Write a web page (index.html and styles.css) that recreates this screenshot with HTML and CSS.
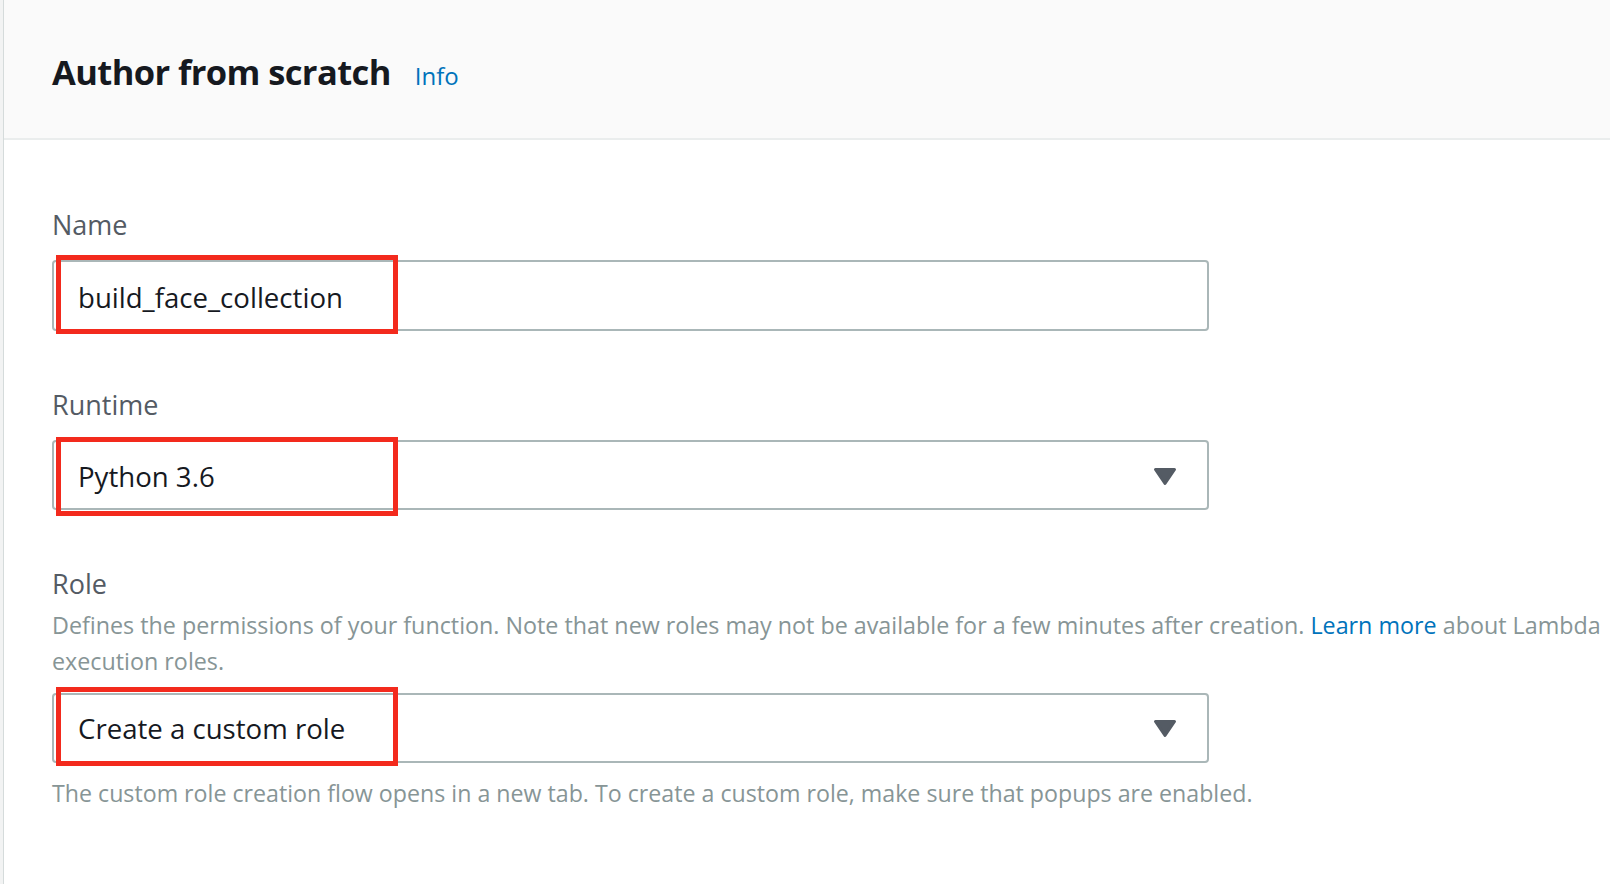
FILE: index.html
```html
<!DOCTYPE html>
<html lang="en">
<head>
<meta charset="utf-8">
<title>Author from scratch</title>
<link rel="stylesheet" href="styles.css">
</head>
<body>
<div class="panel">
  <header class="panel-header">
    <h2 class="panel-title">Author from scratch</h2>
    <a class="info-link" href="#">Info</a>
  </header>
  <section class="form">
    <div class="field">
      <label class="field-label">Name</label>
      <div class="control">
        <div class="text-input">build_face_collection</div>
        <span class="highlight highlight-name"></span>
      </div>
    </div>
    <div class="field">
      <label class="field-label">Runtime</label>
      <div class="control">
        <div class="select">
          <span>Python 3.6</span>
          <svg class="caret" width="24" height="19" viewBox="0 0 24 19"><polygon points="2.5,2.5 21.5,2.5 12,16.5" fill="#545b64" stroke="#545b64" stroke-width="3" stroke-linejoin="round"/></svg>
        </div>
        <span class="highlight highlight-runtime"></span>
      </div>
    </div>
    <div class="field">
      <label class="field-label field-label-tight">Role</label>
      <p class="description">Defines the permissions of your function. Note that new roles may not be available for a few minutes after creation. <a class="link" href="#">Learn more</a> about Lambda execution roles.</p>
      <div class="control">
        <div class="select select-compact">
          <span>Create a custom role</span>
          <svg class="caret" width="24" height="19" viewBox="0 0 24 19"><polygon points="2.5,2.5 21.5,2.5 12,16.5" fill="#545b64" stroke="#545b64" stroke-width="3" stroke-linejoin="round"/></svg>
        </div>
        <span class="highlight highlight-role"></span>
      </div>
      <p class="hint">The custom role creation flow opens in a new tab. To create a custom role, make sure that popups are enabled.</p>
    </div>
  </section>
</div>
</body>
</html>
```

FILE: styles.css
```css
* {
  box-sizing: border-box;
}

html, body {
  margin: 0;
  padding: 0;
}

body {
  background: #f2f3f3;
  font-family: "Open Sans", "Noto Sans", sans-serif;
  color: #16191f;
  overflow: hidden;
}

.panel {
  margin-left: 3px;
  border-left: 1px solid #d5dbdb;
  background: #ffffff;
  min-height: 884px;
}

.panel-header {
  display: flex;
  align-items: baseline;
  height: 140px;
  padding: 52px 48px 0 48px;
  background: #fafafa;
  border-bottom: 2px solid #eaeded;
}

.panel-title {
  margin: 0;
  font-size: 34.5px;
  line-height: 40px;
  font-weight: 700;
  letter-spacing: -0.6px;
  color: #16191f;
}

.info-link {
  margin-left: 24px;
  font-size: 24px;
  color: #0073bb;
  text-decoration: none;
}

.form {
  display: flex;
  flex-direction: column;
  gap: 54px;
  padding: 65px 0 0 48px;
}

.field {
  display: flex;
  flex-direction: column;
  align-items: flex-start;
}

.field-label {
  padding-top: 2px;
  font-size: 27px;
  line-height: 36px;
  color: #545b64;
  margin-bottom: 17px;
}

.field-label-tight {
  margin-bottom: 5px;
}

.description {
  margin: 0 0 14px 0;
  font-size: 23.3px;
  line-height: 36px;
  color: #879596;
}

.link {
  color: #0073bb;
  text-decoration: none;
}

.hint {
  margin: 12px 0 0 0;
  font-size: 23.2px;
  line-height: 36px;
  color: #879596;
}

.control {
  position: relative;
  width: 1157px;
}

.text-input {
  height: 71px;
  padding: 4px 24px 0 24px;
  border: 2px solid #aab7b8;
  border-radius: 4px;
  font-size: 27.6px;
  line-height: 63px;
  color: #16191f;
  background: #ffffff;
}

.select {
  display: flex;
  align-items: center;
  justify-content: space-between;
  height: 70px;
  padding: 1px 30px 0 24px;
  border: 2px solid #aab7b8;
  border-radius: 4px;
  font-size: 27.6px;
  line-height: 64px;
  color: #16191f;
  background: #ffffff;
}

.select-compact {
  padding-top: 0;
  line-height: 62px;
}

.caret {
  display: block;
  margin-top: 1px;
}

.highlight {
  position: absolute;
  left: 4px;
  width: 342px;
  height: 79px;
  border: 5px solid #f32a1d;
  pointer-events: none;
}

.highlight-name {
  top: -5px;
}

.highlight-runtime {
  top: -3px;
}

.highlight-role {
  top: -6px;
}
```
